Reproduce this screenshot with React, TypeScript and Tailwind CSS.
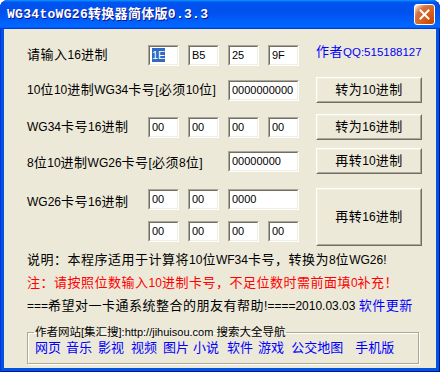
import React from 'react';

const ui = "font-['Liberation_Sans','Noto_Sans_CJK_SC',sans-serif]";

// Latin runs get their own size: the old dialog font pairs narrow Latin with wide CJK cells
const T = ({ s, lat = 'text-[12px] tracking-normal' }: { s: string; lat?: string }) => (
    <>
        {s.split(/([\x20-\x7e]+)/).map((p, i) =>
            /[\x20-\x7e]/.test(p) ? (
                <span key={i} className={lat}>{p}</span>
            ) : (
                <React.Fragment key={i}>{p}</React.Fragment>
            )
        )}
    </>
);

const Field = ({ value, w = 31, selected = false }: { value: string; w?: number; selected?: boolean }) => (
    <div
        className="h-[21px] border border-t-[#aca899] border-l-[#aca899] border-b-white border-r-white shrink-0"
        style={{ width: w }}
    >
        <div className="h-full border border-t-[#716f64] border-l-[#716f64] border-b-[#f1efe2] border-r-[#f1efe2] bg-white flex items-center pl-[2px] text-[11px] tracking-normal text-black">
            {selected ? <span className="bg-[#316ac5] text-white leading-[14px]">{value}</span> : value}
        </div>
    </div>
);

const Btn = ({ label, h = 26 }: { label: string; h?: number }) => (
    <button
        type="button"
        className="w-[106px] shrink-0 border border-t-white border-l-white border-b-[#716f64] border-r-[#716f64] bg-[#ece9d8]"
        style={{ height: h }}
    >
        <div className="h-full border border-t-[#f1efe2] border-l-[#f1efe2] border-b-[#aca899] border-r-[#aca899] flex items-center justify-center text-[13px] tracking-[0.5px] text-black">
            <span><T s={label} /></span>
        </div>
    </button>
);

const links = [
    { t: '网页', ml: 0 },
    { t: '音乐', ml: 5 },
    { t: '影视', ml: 6 },
    { t: '视频', ml: 7 },
    { t: '图片', ml: 6 },
    { t: '小说', ml: 4 },
    { t: '软件', ml: 8 },
    { t: '游戏', ml: 5 },
    { t: '公交地图', ml: 7 },
    { t: '手机版', ml: 12 },
];

export default function App() {
    return (
        <div className="w-[440px] h-[372px] bg-white">
            <div className="w-[440px] h-[372px] flex flex-col rounded-t-[8px] overflow-hidden bg-[#0054e3] shadow-[inset_1px_0_#0831d9,inset_-1px_0_#00138c,inset_0_-1px_#00138c]">
                {/* Title bar */}
                <div className="h-[29px] shrink-0 flex items-center justify-between pl-[7px] pr-[5px] bg-[linear-gradient(180deg,#0997ff,#0053ee_8%,#0050ee_40%,#06f_88%,#06f_93%,#005bff_95%,#003dd7_96%,#003dd7)]">
                    <span className="text-white font-bold text-[13px] tracking-[0.3px] font-['Liberation_Mono','Noto_Sans_CJK_SC',monospace] [text-shadow:1px_1px_#0f1089]">
                        WG34toWG26转换器简体版0.3.3
                    </span>
                    <div className="w-[21px] h-[21px] rounded-[3px] border border-white bg-[radial-gradient(circle_at_90%_90%,#cc4600_0%,#dc6527_55%,#cd7546_70%,#ffccb2_90%,#fff_100%)] flex items-center justify-center">
                        <svg width="11" height="11" viewBox="0 0 11 11">
                            <path d="M1.5 1.5 L9.5 9.5 M9.5 1.5 L1.5 9.5" stroke="white" strokeWidth="2" strokeLinecap="square" />
                        </svg>
                    </div>
                </div>

                {/* Client area */}
                <div className="flex-1 px-[4px] pb-[4px] flex">
                    <div className={`flex-1 bg-[#ece9d8] pl-[23px] flex flex-col text-[13px] tracking-[0.5px] text-black ${ui}`}>
                        {/* Row A */}
                        <div className="mt-[15px] h-[22px] flex items-center">
                            <span className="w-[121px] shrink-0"><T s="请输入16进制" /></span>
                            <div className="flex gap-[9px]">
                                <Field value="1E" selected />
                                <Field value="B5" />
                                <Field value="25" />
                                <Field value="9F" />
                            </div>
                            <span className="ml-[17px] mb-[6px] text-[#0000ff]"><T s="作者QQ:515188127" lat="text-[11.5px] tracking-normal" /></span>
                        </div>

                        {/* Row B */}
                        <div className="mt-[11px] h-[26px] flex items-center">
                            <span className="w-[201px] shrink-0"><T s="10位10进制WG34卡号[必须10位]" /></span>
                            <Field value="0000000000" w={71} />
                            <div className="ml-[17px]">
                                <Btn label="转为10进制" />
                            </div>
                        </div>

                        {/* Row C */}
                        <div className="mt-[11px] h-[26px] flex items-center">
                            <span className="w-[121px] shrink-0"><T s="WG34卡号16进制" /></span>
                            <div className="flex gap-[9px]">
                                <Field value="00" />
                                <Field value="00" />
                                <Field value="00" />
                                <Field value="00" />
                            </div>
                            <div className="ml-[17px]">
                                <Btn label="转为16进制" />
                            </div>
                        </div>

                        {/* Row D */}
                        <div className="mt-[8px] h-[26px] flex items-center">
                            <span className="w-[201px] shrink-0 mt-[4px]"><T s="8位10进制WG26卡号[必须8位]" /></span>
                            <Field value="00000000" w={71} />
                            <div className="ml-[17px]">
                                <Btn label="再转10进制" />
                            </div>
                        </div>

                        {/* Row E */}
                        <div className="mt-[14px] h-[58px] flex items-start">
                            <span className="w-[121px] shrink-0 mt-[3px] leading-[21px]"><T s="WG26卡号16进制" /></span>
                            <div className="mt-[1px] flex flex-col gap-[11px]">
                                <div className="flex gap-[9px]">
                                    <Field value="00" />
                                    <Field value="00" />
                                    <Field value="0000" w={71} />
                                </div>
                                <div className="flex gap-[9px]">
                                    <Field value="00" />
                                    <Field value="00" />
                                    <Field value="00" />
                                    <Field value="00" />
                                </div>
                            </div>
                            <div className="ml-[17px]">
                                <Btn label="再转16进制" h={58} />
                            </div>
                        </div>

                        {/* Notes */}
                        <p className="mt-[4px] h-[20px] leading-[20px]"><T s="说明：本程序适用于计算将10位WF34卡号，转换为8位WG26!" /></p>
                        <p className="mt-[3px] h-[20px] leading-[20px] text-[#ff0000]"><T s="注：请按照位数输入10进制卡号，不足位数时需前面填0补充！" /></p>
                        <p className="mt-[3px] h-[20px] leading-[20px]">
                            <T s="===希望对一卡通系统整合的朋友有帮助!====2010.03.03 " />
                            <span className="text-[#0000ff]">软件更新</span>
                        </p>

                        {/* Group box */}
                        <fieldset className="mt-[8px] w-[392px] h-[40px] border border-[#aca899] shadow-[inset_1px_1px_0_white,1px_1px_0_white]">
                            <legend className="ml-[6px] px-[1px] h-[16px] leading-[16px] text-[11.5px] tracking-normal">
                                <T s="作者网站[集汇搜]:http://jihuisou.com 搜索大全导航" lat="text-[11px]" />
                            </legend>
                            <div className="pl-[7px] flex text-[13px] tracking-normal text-[#0000ff] leading-[16px]">
                                {links.map((l) => (
                                    <span key={l.t} style={{ marginLeft: l.ml }}>{l.t}</span>
                                ))}
                            </div>
                        </fieldset>
                    </div>
                </div>
            </div>
        </div>
    );
}
